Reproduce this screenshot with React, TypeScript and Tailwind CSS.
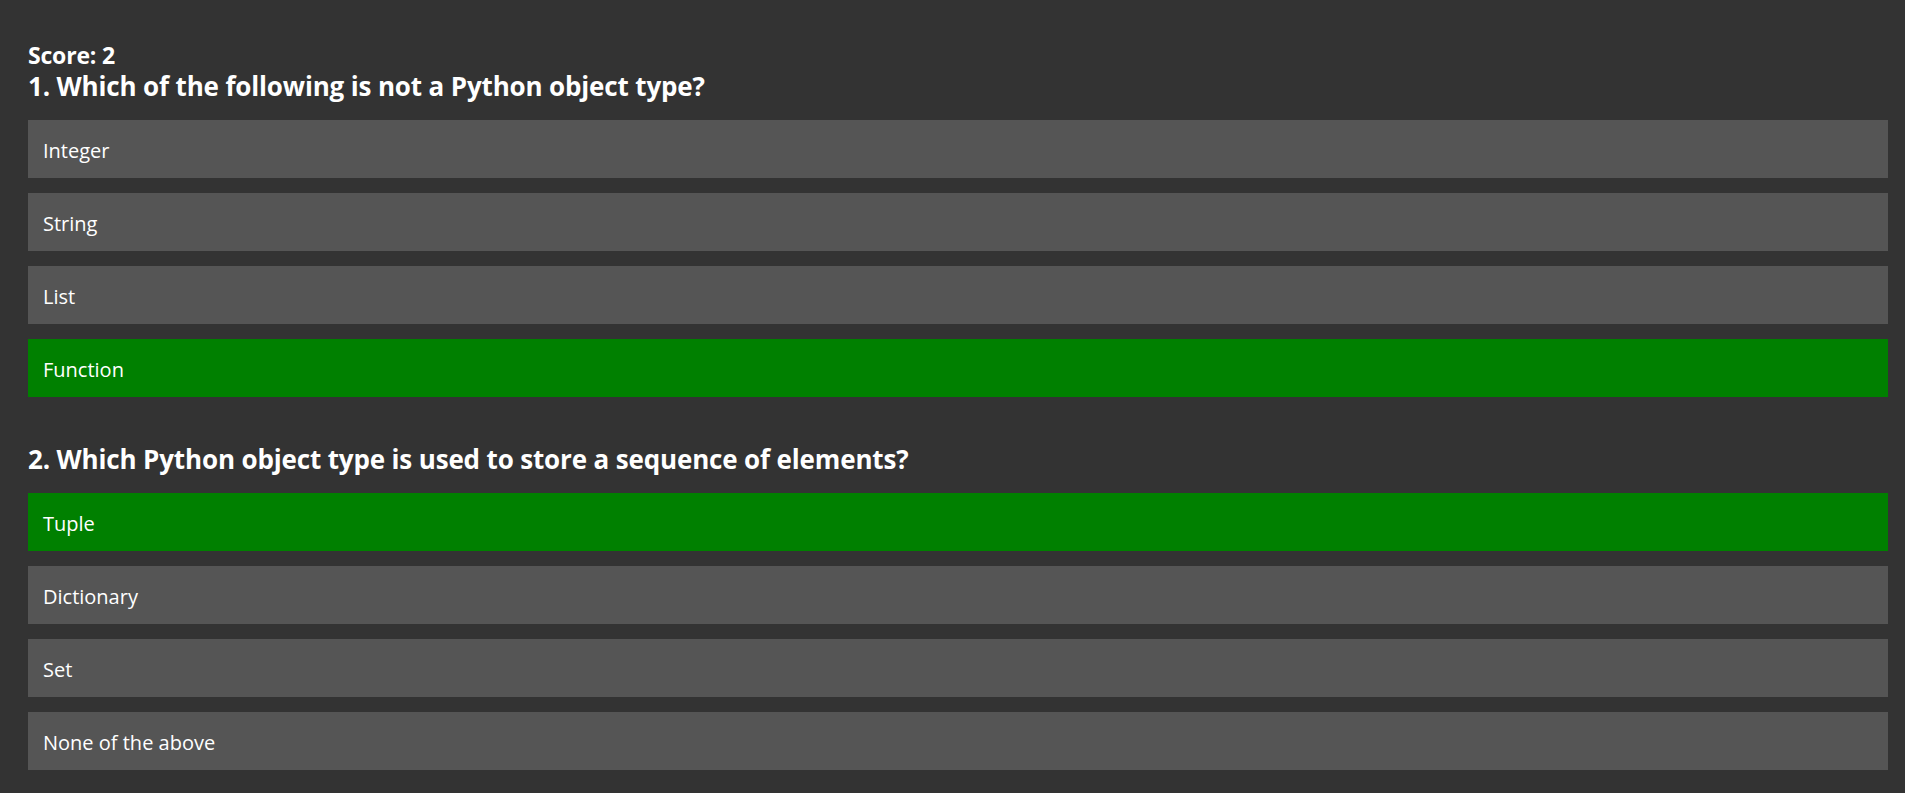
import React from "react";

type Q = { title: string; options: { label: string; correct?: boolean }[] };

const questions: Q[] = [
  {
    title: "1. Which of the following is not a Python object type?",
    options: [
      { label: "Integer" },
      { label: "String" },
      { label: "List" },
      { label: "Function", correct: true },
    ],
  },
  {
    title: "2. Which Python object type is used to store a sequence of elements?",
    options: [
      { label: "Tuple", correct: true },
      { label: "Dictionary" },
      { label: "Set" },
      { label: "None of the above" },
    ],
  },
];

export default function App() {
  return (
    <div
      className="min-h-screen bg-[#333333] pl-[28px] pr-[17px] pt-[41px] pb-[23px] text-white"
      style={{ fontFamily: '"Open Sans", "Noto Sans", sans-serif' }}
    >
      <h3 className="text-[23px] font-bold leading-[28px] tracking-[-0.2px]">Score: 2</h3>
      {questions.map((q, qi) => (
        <div key={qi} className={qi === 0 ? "" : "mt-[45px]"}>
          <h2 className="mb-[16px] text-[26px] font-bold leading-[35px] tracking-[-0.15px]">{q.title}</h2>
          <div className="flex flex-col gap-[15px]">
            {q.options.map((o) => (
              <div
                key={o.label}
                className={
                  "flex h-[58px] items-center pl-[15px] pt-[3px] text-[20px] " +
                  (o.correct ? "bg-[#008000]" : "bg-[#555555]")
                }
              >
                {o.label}
              </div>
            ))}
          </div>
        </div>
      ))}
    </div>
  );
}
